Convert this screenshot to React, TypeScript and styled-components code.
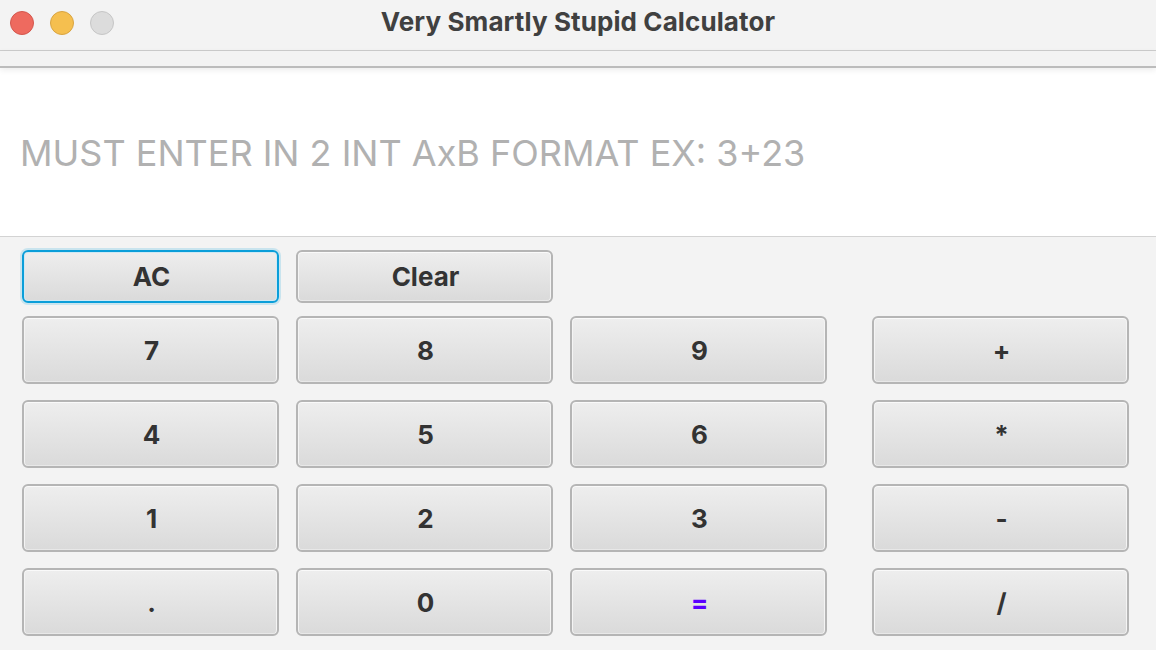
import React from "react";
import styled, { createGlobalStyle, css } from "styled-components";

const GlobalStyle = createGlobalStyle`
  html, body { margin: 0; padding: 0; background: #f3f3f3; }
  body { font-family: Inter, "Liberation Sans", Arial, sans-serif; }
  * { box-sizing: border-box; }
`;

const Window = styled.div`
  width: 1156px;
  height: 650px;
  display: flex;
  flex-direction: column;
  background: #f3f3f3;
  overflow: hidden;
`;

const TitleBar = styled.div`
  height: 51px;
  flex: none;
  display: grid;
  grid-template-columns: 1fr auto 1fr;
  align-items: center;
  border-bottom: 1px solid #cdcdcd;
  padding: 0 10px 8px 10px;
`;

const Lights = styled.div`
  display: flex;
  gap: 16px;
  align-items: center;
  margin-top: 4px;
`;

const Light = styled.span<{ $fill: string; $edge: string }>`
  width: 24px;
  height: 24px;
  border-radius: 50%;
  background: ${(p) => p.$fill};
  border: 1px solid ${(p) => p.$edge};
`;

const Title = styled.div`
  font-family: Inter, "Liberation Sans", Arial, sans-serif;
  font-weight: 700;
  font-size: 26px;
  color: #404040;
  letter-spacing: 0.1px;
`;

const Strip = styled.div`
  height: 17px;
  flex: none;
  background: #f3f3f3;
  border-bottom: 2px solid #bcbcbc;
  box-shadow: 0 2px 6px rgba(0, 0, 0, 0.08);
  position: relative;
  z-index: 1;
`;

const Display = styled.div`
  height: 169px;
  flex: none;
  background: #ffffff;
  border-bottom: 1px solid #d3d3d3;
  display: flex;
  align-items: center;
  padding: 0 0 0 20px;
`;

const Prompt = styled.div`
  font-family: Inter, "Liberation Sans", Arial, sans-serif;
  font-weight: 400;
  font-size: 36px;
  color: #b1b1b1;
  white-space: nowrap;
  margin-top: 1px;
`;

const Keypad = styled.div`
  padding: 13px 0 0 22px;
  display: flex;
  flex-direction: column;
  gap: 13px;
`;

const TopRow = styled.div`
  display: grid;
  grid-template-columns: 257px 257px;
  column-gap: 17px;
  height: 53px;
`;

const Grid = styled.div`
  display: grid;
  grid-template-columns: 257px 257px 257px 285px;
  grid-auto-rows: 68px;
  column-gap: 17px;
  row-gap: 16px;
`;

const Key = styled.button<{ $focused?: boolean; $accent?: boolean; $op?: boolean }>`
  font-family: Inter, "Liberation Sans", Arial, sans-serif;
  font-weight: 700;
  font-size: 26px;
  color: ${(p) => (p.$accent ? "#5a00ff" : "#333333")};
  background: linear-gradient(#eeeeee, #dadada);
  border: 2px solid #b5b5b5;
  border-radius: 6px;
  box-shadow: inset 0 1px 0 #fafafa, inset 1px 0 0 #f4f4f4, inset -1px 0 0 #f4f4f4, inset 0 -1px 0 #e8e8e8;
  display: flex;
  align-items: center;
  justify-content: center;
  padding: 0 0 0 2px;
  margin: 0;
  cursor: default;
  ${(p) =>
    p.$op &&
    css`
      justify-self: end;
      width: 257px;
    `}
  ${(p) =>
    p.$focused &&
    css`
      border-color: #0a9ed9;
      box-shadow: 0 0 0 2px rgba(10, 158, 217, 0.18), inset 0 0 0 1px #cfe9f4;
    `}
`;

const rows: { label: string; op?: boolean; accent?: boolean }[][] = [
  [{ label: "7" }, { label: "8" }, { label: "9" }, { label: "+", op: true }],
  [{ label: "4" }, { label: "5" }, { label: "6" }, { label: "*", op: true }],
  [{ label: "1" }, { label: "2" }, { label: "3" }, { label: "-", op: true }],
  [{ label: "." }, { label: "0" }, { label: "=", accent: true }, { label: "/", op: true }],
];

export default function App() {
  return (
    <>
      <GlobalStyle />
      <Window>
        <TitleBar>
          <Lights>
            <Light $fill="#ee6a5f" $edge="#d4574d" />
            <Light $fill="#f5bf4f" $edge="#d9a441" />
            <Light $fill="#dcdcdc" $edge="#c6c6c6" />
          </Lights>
          <Title>Very Smartly Stupid Calculator</Title>
          <div />
        </TitleBar>
        <Strip />
        <Display>
          <Prompt>MUST ENTER IN 2 INT AxB FORMAT EX: 3+23</Prompt>
        </Display>
        <Keypad>
          <TopRow>
            <Key $focused>AC</Key>
            <Key>Clear</Key>
          </TopRow>
          <Grid>
            {rows.flat().map((k, i) => (
              <Key key={i} $op={k.op} $accent={k.accent}>
                {k.label}
              </Key>
            ))}
          </Grid>
        </Keypad>
      </Window>
    </>
  );
}
